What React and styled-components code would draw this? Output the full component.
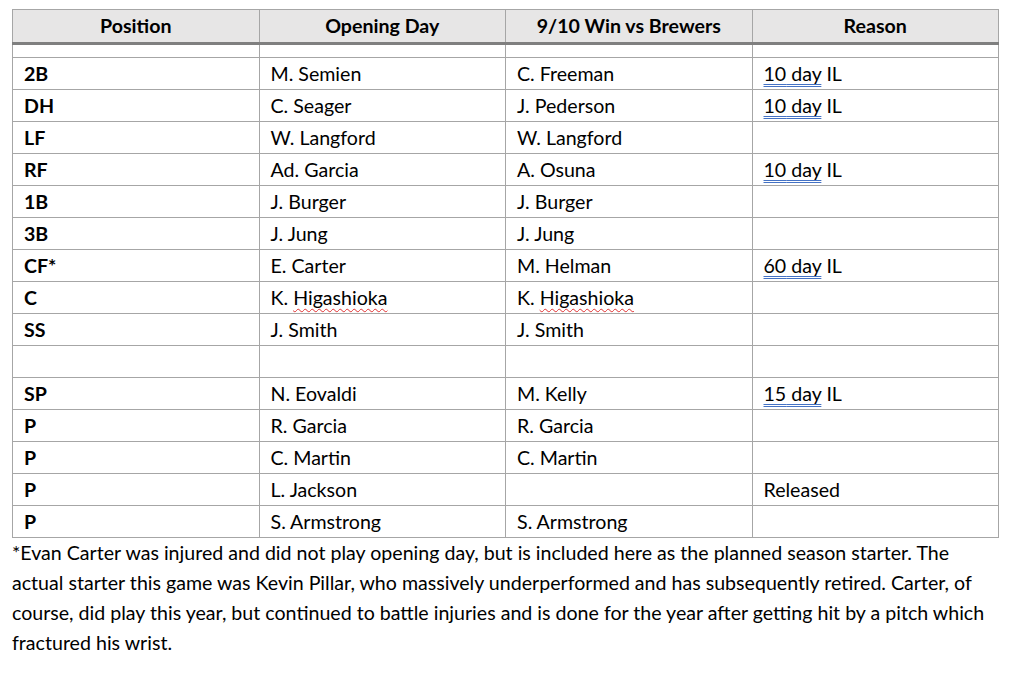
import styled, { createGlobalStyle } from 'styled-components';

const GlobalStyle = createGlobalStyle`
	body {
		margin: 0;
		background: #ffffff;
		font-family: Lato, "Liberation Sans", sans-serif;
		color: #000000;
	}
`;

const Page = styled.div`
	padding: 9px 0 0 12px;
	width: 986px;
`;

const Table = styled.table`
	width: 987px;
	border-collapse: collapse;
	table-layout: fixed;
	font-size: 19.6px;
`;

const HeadCell = styled.th`
	height: 32px;
	padding: 0;
	background: #e7e6e6;
	border: 1px solid #a6a6a6;
	border-bottom: 3px solid #7f7f7f;
	font-weight: 700;
	text-align: center;
	vertical-align: middle;
	line-height: 1;
`;

const Cell = styled.td`
	height: ${props => props.spacer ? '12px' : '31px'};
	padding: 0 0 0 11px;
	border: 1px solid #a6a6a6;
	font-weight: ${props => props.bold ? 700 : 400};
	vertical-align: middle;
	white-space: nowrap;
	line-height: 1;
`;

// двойное синее подчёркивание грамматики
const Grammar = styled.span`
	text-decoration: underline double #4472c4;
	text-decoration-thickness: 1px;
	text-decoration-skip-ink: none;
	text-underline-offset: 3px;
`;

// красная волна орфографии
const Spelling = styled.span`
	text-decoration: underline wavy #e03030;
	text-decoration-thickness: 1px;
	text-decoration-skip-ink: none;
	text-underline-offset: 3px;
`;

const Note = styled.p`
	margin: 0;
	font-size: 19.6px;
	line-height: 30px;
	white-space: nowrap;
`;

const rows = [
	['2B', 'M. Semien', 'C. Freeman', '10'],
	['DH', 'C. Seager', 'J. Pederson', '10'],
	['LF', 'W. Langford', 'W. Langford', ''],
	['RF', 'Ad. Garcia', 'A. Osuna', '10'],
	['1B', 'J. Burger', 'J. Burger', ''],
	['3B', 'J. Jung', 'J. Jung', ''],
	['CF*', 'E. Carter', 'M. Helman', '60'],
	['C', 'K. Higashioka', 'K. Higashioka', ''],
	['SS', 'J. Smith', 'J. Smith', ''],
	['', '', '', ''],
	['SP', 'N. Eovaldi', 'M. Kelly', '15'],
	['P', 'R. Garcia', 'R. Garcia', ''],
	['P', 'C. Martin', 'C. Martin', ''],
	['P', 'L. Jackson', '', 'Released'],
	['P', 'S. Armstrong', 'S. Armstrong', ''],
];

const renderName = (name) =>
	name === 'K. Higashioka' ? <>K. <Spelling>Higashioka</Spelling></> : name;

const renderReason = (reason) => {
	if (!reason || reason === 'Released') return reason;
	return <><Grammar>{reason} day</Grammar> IL</>;
};

const App = () => (
	<Page>
		<GlobalStyle />
		<Table>
			<thead>
				<tr>
					<HeadCell>Position</HeadCell>
					<HeadCell>Opening Day</HeadCell>
					<HeadCell>9/10 Win vs Brewers</HeadCell>
					<HeadCell>Reason</HeadCell>
				</tr>
			</thead>
			<tbody>
				<tr>
					<Cell spacer />
					<Cell spacer />
					<Cell spacer />
					<Cell spacer />
				</tr>
				{rows.map((r, i) => (
					<tr key={i}>
						<Cell bold>{r[0]}</Cell>
						<Cell>{renderName(r[1])}</Cell>
						<Cell>{renderName(r[2])}</Cell>
						<Cell>{renderReason(r[3])}</Cell>
					</tr>
				))}
			</tbody>
		</Table>
		<Note>
			*Evan Carter was injured and did not play opening day, but is included here as the planned season starter. The<br />
			actual starter this game was Kevin Pillar, who massively underperformed and has subsequently retired. Carter, of<br />
			course, did play this year, but continued to battle injuries and is done for the year after getting hit by a pitch which<br />
			fractured his wrist.
		</Note>
	</Page>
);

export default App;
